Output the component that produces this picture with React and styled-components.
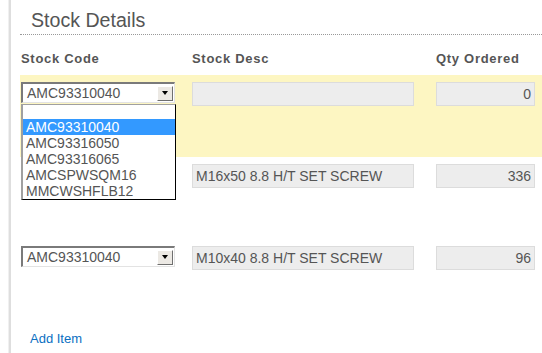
import styled, { createGlobalStyle } from 'styled-components'

const GlobalStyle = createGlobalStyle`
  body {
    margin: 0;
    background: #ffffff;
    font-family: 'Liberation Sans', Arial, sans-serif;
  }
`

const Page = styled.div`
  margin-left: 9px;
  border-left: 2px solid #dedede;
  box-shadow: -1px 0 0 #f0f0f0;
  padding-left: 9px;
  min-height: 353px;
  box-sizing: border-box;
`

const Title = styled.h2`
  margin: 0;
  padding: 9px 0 0 11px;
  height: 25px;
  font-size: 19.6px;
  font-weight: normal;
  color: #555555;
  line-height: 23px;
  border-bottom: 1px dotted #999999;
`

const Grid = styled.div`
  display: grid;
  grid-template-columns: 171px 244px 1fr;
  padding-left: 1px;
  align-items: start;
`

const HeaderRow = styled(Grid)`
  height: 40px;
  align-items: center;
`

const Heading = styled.div`
  font-size: 13px;
  font-weight: bold;
  letter-spacing: 0.7px;
  color: #555555;
  padding-top: 6px;
`

const Row = styled(Grid)`
  height: 82px;
  box-sizing: border-box;
  padding-top: 7px;
  background: ${(p) => (p.$active ? '#fdf6c2' : 'transparent')};
`

const SelectWrap = styled.div`
  position: relative;
  width: 154px;
`

const SelectBox = styled.div`
  height: 21px;
  box-sizing: border-box;
  display: flex;
  align-items: center;
  border-style: solid;
  border-width: 2px 1px 1px 2px;
  border-color: #7a7a7a #e3e3e3 #e3e3e3 #7a7a7a;
  background: #ffffff;
  padding-left: 4px;
  font-size: 14px;
  color: #555555;
`

const SelectText = styled.span`
  flex: 1;
`

const ArrowButton = styled.span`
  width: 16px;
  height: 15px;
  margin-right: 1px;
  box-sizing: border-box;
  display: flex;
  align-items: center;
  justify-content: center;
  background: #ece9e4;
  border-style: solid;
  border-width: 1px;
  border-color: #ffffff #6f6f6f #6f6f6f #ffffff;

  &::after {
    content: '';
    border-left: 3px solid transparent;
    border-right: 3px solid transparent;
    border-top: 4px solid #000000;
  }
`

const OptionList = styled.ul`
  position: absolute;
  top: 22px;
  left: 0;
  width: 155px;
  box-sizing: border-box;
  margin: 0;
  padding: 0;
  list-style: none;
  background: #ffffff;
  border-style: solid;
  border-width: 1px 1px 1px 2px;
  border-color: #a0a0a0 #000000 #000000 #a0a0a0;
  z-index: 2;
`

const Option = styled.li`
  height: ${(p) => (p.$blank ? '14px' : '16px')};
  line-height: 16px;
  padding-left: 3px;
  font-size: 14px;
  color: ${(p) => (p.$selected ? '#ffffff' : '#555555')};
  background: ${(p) => (p.$selected ? '#3399ff' : 'transparent')};
`

const Field = styled.div`
  height: 24px;
  box-sizing: border-box;
  background: #ededed;
  border: 1px solid #dcdcdc;
  padding: 0 3px;
  font-size: 14px;
  line-height: 22px;
  color: #555555;
  white-space: nowrap;
  width: ${(p) => p.$width}px;
  text-align: ${(p) => (p.$right ? 'right' : 'left')};
`

const AddLink = styled.a`
  display: inline-block;
  margin: 10px 0 0 10px;
  font-size: 13px;
  color: #0a6fc2;
  text-decoration: none;
`

const options = ['AMC93310040', 'AMC93316050', 'AMC93316065', 'AMCSPWSQM16', 'MMCWSHFLB12']

const rows = [
  { code: 'AMC93310040', desc: '', qty: '0', active: true, open: true },
  { code: null, desc: 'M16x50 8.8 H/T SET SCREW', qty: '336' },
  { code: 'AMC93310040', desc: 'M10x40 8.8 H/T SET SCREW', qty: '96' },
]

function CodeSelect({ value, open }) {
  return (
    <SelectWrap>
      <SelectBox>
        <SelectText>{value}</SelectText>
        <ArrowButton />
      </SelectBox>
      {open && (
        <OptionList>
          <Option $blank />
          {options.map((o) => (
            <Option key={o} $selected={o === value}>
              {o}
            </Option>
          ))}
        </OptionList>
      )}
    </SelectWrap>
  )
}

export default function App() {
  return (
    <>
      <GlobalStyle />
      <Page>
        <Title>Stock Details</Title>
        <HeaderRow>
          <Heading>Stock Code</Heading>
          <Heading>Stock Desc</Heading>
          <Heading>Qty Ordered</Heading>
        </HeaderRow>
        {rows.map((r, i) => (
          <Row key={i} $active={r.active}>
            {r.code ? <CodeSelect value={r.code} open={r.open} /> : <div />}
            <Field $width={222}>{r.desc}</Field>
            <Field $width={99} $right>
              {r.qty}
            </Field>
          </Row>
        ))}
        <AddLink href="#">Add Item</AddLink>
      </Page>
    </>
  )
}
